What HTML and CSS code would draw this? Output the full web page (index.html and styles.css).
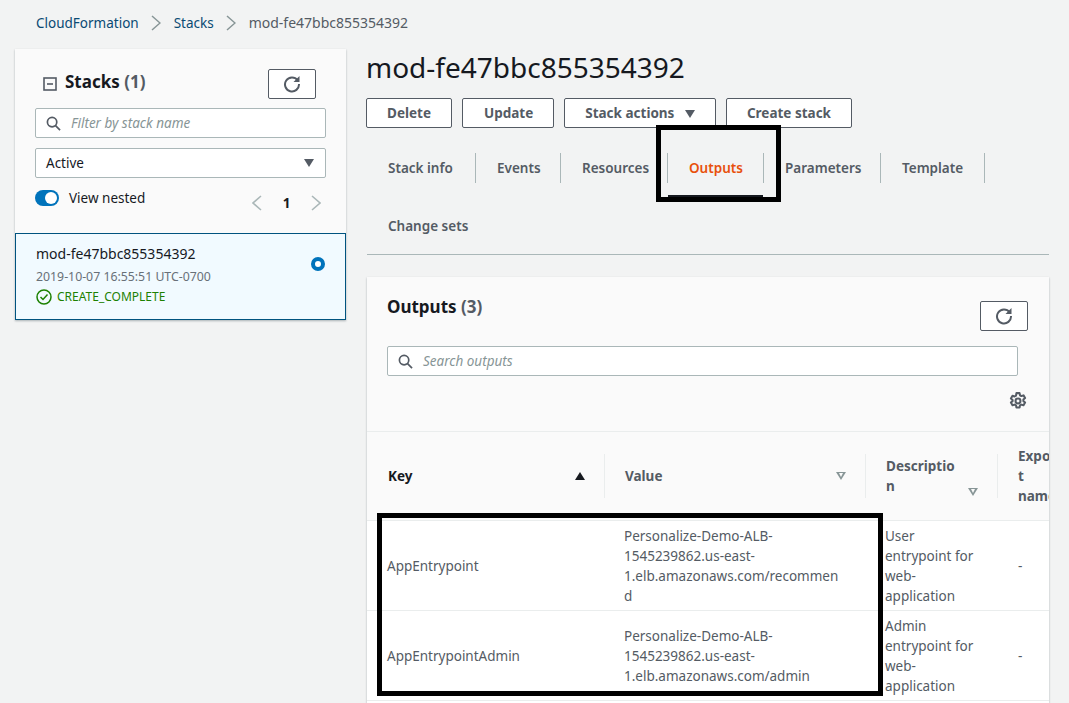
FILE: index.html
```html
<!DOCTYPE html>
<html lang="en">

<head>
    <meta charset="UTF-8">
    <title>mod-fe47bbc855354392</title>
    <link rel="stylesheet" href="styles.css">
</head>

<body>

    <nav class="breadcrumb">
        <a href="#">CloudFormation</a>
        <svg class="crumb-sep" viewBox="0 0 10 16"><path d="M1 1l8 7-8 7"/></svg>
        <a href="#">Stacks</a>
        <svg class="crumb-sep" viewBox="0 0 10 16"><path d="M1 1l8 7-8 7"/></svg>
        <span class="crumb-current">mod-fe47bbc855354392</span>
    </nav>

    <div class="layout">
        <aside class="stack-panel">
            <div class="stack-panel-top">
                <div class="panel-head">
                    <svg class="collapse-icon" viewBox="0 0 14 14"><rect x="1" y="1" width="12" height="12"/><path d="M4 7h6"/></svg>
                    <h2 class="panel-title">Stacks <span class="count">(1)</span></h2>
                    <button class="btn btn-icon">
                        <svg class="refresh" viewBox="0 0 18 18"><path d="M14.6 5.2A7 7 0 1 0 16 9"/><path class="fill" d="M16.500 1v6h-6z"/></svg>
                    </button>
                </div>
                <div class="field">
                    <svg class="search-icon" viewBox="0 0 16 16"><circle cx="6.5" cy="6.5" r="5"/><path d="M10.2 10.2L15 15"/></svg>
                    <span class="placeholder">Filter by stack name</span>
                </div>
                <div class="field select">
                    <span>Active</span>
                    <span class="caret"></span>
                </div>
                <div class="toggle-row">
                    <div class="toggle"><span class="knob"></span></div>
                    <span class="toggle-label">View nested</span>
                    <div class="pager">
                        <svg viewBox="0 0 10 16"><path d="M9 1L1 8l8 7"/></svg>
                        <b>1</b>
                        <svg viewBox="0 0 10 16"><path d="M1 1l8 7-8 7"/></svg>
                    </div>
                </div>
            </div>
            <div class="stack-item">
                <div>
                    <div class="stack-name">mod-fe47bbc855354392</div>
                    <div class="stack-date">2019-10-07 16:55:51 UTC-0700</div>
                    <div class="stack-status">
                        <svg viewBox="0 0 16 16"><circle cx="8" cy="8" r="7"/><path d="M4.5 8l2.5 2.5 4.5-5"/></svg>
                        CREATE_COMPLETE
                    </div>
                </div>
                <span class="radio"></span>
            </div>
        </aside>

        <main class="detail">
            <h1>mod-fe47bbc855354392</h1>
            <div class="actions">
                <button class="btn">Delete</button>
                <button class="btn btn-update">Update</button>
                <button class="btn btn-menu">Stack actions <span class="caret"></span></button>
                <button class="btn">Create stack</button>
            </div>

            <div class="tabs">
                <a class="tab" href="#">Stack info</a>
                <a class="tab" href="#">Events</a>
                <a class="tab" href="#">Resources</a>
                <a class="tab active" href="#">Outputs</a>
                <a class="tab" href="#">Parameters</a>
                <a class="tab" href="#">Template</a>
                <a class="tab last" href="#">Change sets</a>
            </div>

            <section class="card">
                <div class="card-head">
                    <h2 class="card-title">Outputs <span class="count">(3)</span></h2>
                    <button class="btn btn-icon">
                        <svg class="refresh" viewBox="0 0 18 18"><path d="M14.6 5.2A7 7 0 1 0 16 9"/><path class="fill" d="M16.500 1v6h-6z"/></svg>
                    </button>
                </div>
                <div class="card-search">
                    <div class="field">
                        <svg class="search-icon" viewBox="0 0 16 16"><circle cx="6.5" cy="6.5" r="5"/><path d="M10.2 10.2L15 15"/></svg>
                        <span class="placeholder">Search outputs</span>
                    </div>
                </div>
                <div class="card-tools">
                    <svg class="gear" viewBox="0 0 16 16">
                        <path d="M6.600 1h2.800l.4 1.900 1.200.7 1.900-.6 1.400 2.400-1.500 1.300v1.400l1.500 1.300-1.400 2.400-1.900-.6-1.200.7-.4 1.900H6.600l-.4-1.900-1.200-.7-1.900.6-1.400-2.400 1.500-1.300V7.100L1.700 5.800l1.400-2.400 1.900.6 1.200-.7z" stroke-linejoin="round"/>
                        <circle cx="8" cy="8" r="2.200"/>
                    </svg>
                </div>

                <table class="outputs">
                    <colgroup>
                        <col class="col-key"><col class="col-value"><col class="col-desc"><col class="col-export">
                    </colgroup>
                    <thead>
                        <tr>
                            <th><div class="th-in">Key<span class="sort sort-on"></span></div></th>
                            <th><div class="th-in">Value<span class="sort"></span></div></th>
                            <th><div class="th-in th-low"><span class="th-text">Description</span><span class="sort"></span></div></th>
                            <th><div class="th-in th-last"><span class="th-text">Export name</span></div></th>
                        </tr>
                    </thead>
                    <tbody>
                        <tr>
                            <td>AppEntrypoint</td>
                            <td>Personalize-Demo-ALB-<br>1545239862.us-east-<br>1.elb.amazonaws.com/recommen<br>d</td>
                            <td>User<br>entrypoint for<br>web-<br>application</td>
                            <td>-</td>
                        </tr>
                        <tr>
                            <td>AppEntrypointAdmin</td>
                            <td>Personalize-Demo-ALB-<br>1545239862.us-east-<br>1.elb.amazonaws.com/admin</td>
                            <td>Admin<br>entrypoint for<br>web-<br>application</td>
                            <td>-</td>
                        </tr>
                        <tr class="row-cut">
                            <td></td><td></td><td></td><td></td>
                        </tr>
                    </tbody>
                </table>
            </section>
        </main>
    </div>

    <!-- annotation boxes drawn over the screenshot -->
    <div class="mark mark-tab"></div>
    <div class="mark mark-rows"></div>

</body>

</html>
```

FILE: styles.css
```css
* {
    margin: 0;
    padding: 0;
    box-sizing: border-box;
}

html,
body {
    height: 703px;
    overflow: hidden;
}

body {
    position: relative;
    font-family: "Noto Sans", Arial, sans-serif;
    font-size: 13.5px;
    line-height: 20px;
    background-color: #f2f3f3;
    color: #16191f;
}

a {
    text-decoration: none;
}

svg {
    display: block;
    fill: none;
    stroke: currentColor;
}

.breadcrumb {
    display: flex;
    align-items: center;
    height: 46px;
    padding-left: 36px;
    color: #545b64;
}

.breadcrumb a {
    color: #0a4a74;
}

.crumb-current {
    font-size: 14px;
}

.crumb-sep {
    width: 10px;
    height: 16px;
    margin: 0 12.500px;
    color: #879596;
    stroke-width: 1.5;
}

.layout {
    display: grid;
    grid-template-columns: 331px 682px;
    column-gap: 21px;
    padding: 3px 0 0 15px;
    align-items: start;
}

/* left panel */

.stack-panel {
    background-color: #fafafa;
    box-shadow: 0 1px 2px rgba(0, 28, 36, 0.3);
}

.stack-panel-top {
    height: 184px;
    padding: 20px 20px 0;
}

.panel-head {
    display: flex;
    align-items: center;
    height: 29px;
    padding-left: 8px;
    margin-bottom: 10px;
}

.collapse-icon {
    width: 14px;
    height: 14px;
    margin-right: 8px;
    color: #545b64;
    stroke-width: 1.6;
}

.panel-title {
    font-size: 17px;
    font-weight: 700;
    margin-top: -4px;
}

.count {
    color: #545b64;
}

.panel-head .btn-icon {
    margin-left: auto;
    margin-right: 10px;
}

.btn {
    height: 30px;
    padding: 0 20px;
    border: 1px solid #545b64;
    border-radius: 2px;
    background-color: #ffffff;
    color: #545b64;
    font-family: inherit;
    font-size: 13.5px;
    font-weight: 700;
}

.btn-icon {
    display: flex;
    align-items: center;
    justify-content: center;
    width: 48px;
    height: 30px;
    padding: 0;
    color: #545b64;
}

.refresh {
    width: 18px;
    height: 18px;
    stroke-width: 2;
}

.refresh .fill {
    fill: currentColor;
    stroke: none;
}

.field {
    display: flex;
    align-items: center;
    height: 30px;
    padding: 0 10px;
    border: 1px solid #aab7b8;
    border-radius: 2px;
    background-color: #ffffff;
}

.search-icon {
    width: 15px;
    height: 15px;
    margin-right: 10px;
    color: #545b64;
    stroke-width: 1.8;
}

.placeholder {
    color: #879596;
    font-style: italic;
}

.select {
    justify-content: space-between;
    margin-top: 10px;
}

.caret {
    display: inline-block;
    width: 0;
    height: 0;
    border-left: 5.500px solid transparent;
    border-right: 5.500px solid transparent;
    border-top: 8px solid #545b64;
}

.select .caret {
    margin-right: 1px;
}

.toggle-row {
    display: flex;
    align-items: flex-start;
    margin-top: 12px;
}

.toggle {
    width: 24px;
    height: 16px;
    padding: 2px;
    border-radius: 8px;
    background-color: #0073bb;
    display: flex;
    justify-content: flex-end;
}

.knob {
    width: 12px;
    height: 12px;
    border-radius: 50%;
    background-color: #ffffff;
}

.toggle-label {
    margin-left: 10px;
    color: #16191f;
    line-height: 16px;
}

.pager {
    display: flex;
    align-items: center;
    margin-left: auto;
    margin-top: 5px;
    margin-right: 5px;
    gap: 20px;
    color: #aab7b8;
}

.pager svg {
    width: 10px;
    height: 16px;
    stroke-width: 1.6;
}

.pager b {
    width: 9px;
    color: #16191f;
    line-height: 16px;
    text-align: center;
}

.stack-item {
    display: flex;
    align-items: flex-start;
    justify-content: space-between;
    height: 87px;
    padding: 9px 20px 0;
    border: 1px solid #00537f;
    background-color: #f1faff;
}

.stack-name {
    font-size: 14px;
    line-height: 22px;
}

.stack-date {
    margin-top: 2px;
    color: #687078;
    font-size: 12.300px;
    line-height: 20px;
}

.stack-status {
    display: flex;
    align-items: center;
    color: #1d8102;
    font-size: 12px;
    line-height: 20px;
}

.stack-status svg {
    width: 16px;
    height: 16px;
    margin-right: 5px;
    stroke-width: 1.500;
}

.radio {
    width: 14px;
    height: 14px;
    margin-top: 14px;
    border: 4px solid #0073bb;
    border-radius: 50%;
    background-color: #ffffff;
}

/* right side */

h1 {
    margin-left: -1px;
    font-size: 28px;
    font-weight: 400;
    line-height: 36px;
    color: #16191f;
}

.actions {
    display: flex;
    gap: 10px;
    margin: 13px 0 0 -1px;
}

.btn-update {
    padding: 0 20px 0 21px;
}

.btn-menu .caret {
    margin-left: 7px;
}

.tabs {
    display: grid;
    grid-template-columns: 109px 85px 107px 96px 117px 104px;
    align-content: start;
    height: 127px;
    padding-top: 25px;
    border-bottom: 1px solid #aab7b8;
}

.tab {
    position: relative;
    display: flex;
    align-items: center;
    height: 30px;
    padding-left: 21px;
    border-right: 1px solid #aab7b8;
    color: #545b64;
    font-weight: 600;
    white-space: nowrap;
}

.tab.active {
    color: #e8500c;
    border-left: 1px solid #aab7b8;
    margin-left: -1px;
}

.tab.active::after {
    content: "";
    position: absolute;
    left: 0;
    right: 0;
    top: 42px;
    height: 2px;
    background-color: #16191f;
}

.tab.last {
    grid-column: 1 / -1;
    margin-top: 28px;
    border-right: 0;
}

.card {
    height: 426px;
    margin-top: 22px;
    background-color: #fafafa;
    box-shadow: 0 1px 2px rgba(0, 28, 36, 0.3);
    overflow: hidden;
}

.card-head {
    display: flex;
    justify-content: space-between;
    padding: 20px 21px 0 20px;
}

.card-title {
    font-size: 17px;
    font-weight: 700;
    line-height: 20px;
}

.card-head .btn-icon {
    margin-top: 4px;
}

.card-search {
    padding: 15px 31px 0 20px;
}

.card-tools {
    display: flex;
    justify-content: flex-end;
    height: 56px;
    padding: 16px 22px 0 0;
    border-bottom: 1px solid #eaeded;
}

.gear {
    width: 18px;
    height: 18px;
    color: #545b64;
    stroke-width: 1.800;
}

.outputs {
    width: 682px;
    table-layout: fixed;
    border-collapse: collapse;
}

.col-key {
    width: 238px;
}

.col-value {
    width: 261px;
}

.col-desc {
    width: 132px;
}

th {
    height: 88px;
    border-bottom: 1px solid #eaeded;
    color: #545b64;
    font-weight: 700;
    text-align: left;
    vertical-align: middle;
}

.outputs th:first-child {
    color: #16191f;
}

.th-in {
    display: flex;
    align-items: center;
    justify-content: space-between;
    height: 44px;
    padding: 0 19px 0 21px;
    border-right: 1px solid #eaeded;
}

.outputs th:nth-child(2) .th-in {
    padding-left: 20px;
}

.th-low {
    padding-left: 20px;
    padding-right: 19px;
    align-items: flex-end;
    padding-bottom: 2px;
}

.th-text {
    width: 72px;
    overflow-wrap: anywhere;
}

.th-last {
    border-right: 0;
    padding: 0 0 0 20px;
    height: 60px;
    justify-content: flex-start;
}

.th-last .th-text {
    width: 40px;
    flex: none;
}

.sort {
    flex: none;
    width: 0;
    height: 0;
    border-left: 5px solid transparent;
    border-right: 5px solid transparent;
    border-top: 8px solid #879596;
    position: relative;
}

.sort::after {
    content: "";
    position: absolute;
    left: -2.500px;
    top: -6.500px;
    border-left: 2.500px solid transparent;
    border-right: 2.500px solid transparent;
    border-top: 4px solid #fafafa;
}

.sort-on {
    border-top: 0;
    border-bottom: 8px solid #16191f;
}

.sort-on::after {
    display: none;
}

td {
    padding: 5px 20px 4px 20px;
    border-bottom: 1px solid #eaeded;
    background-color: #ffffff;
    vertical-align: middle;
    color: #545b64;
}

.outputs td:nth-child(2),
.outputs td:nth-child(3) {
    padding-left: 19px;
}

.row-cut td {
    height: 40px;
}

/* annotation boxes */

.mark {
    position: absolute;
    border: 5px solid #000000;
}

.mark-tab {
    left: 656px;
    top: 125px;
    width: 125px;
    height: 77px;
}

.mark-rows {
    left: 377px;
    top: 513px;
    width: 506px;
    height: 183px;
}
```
